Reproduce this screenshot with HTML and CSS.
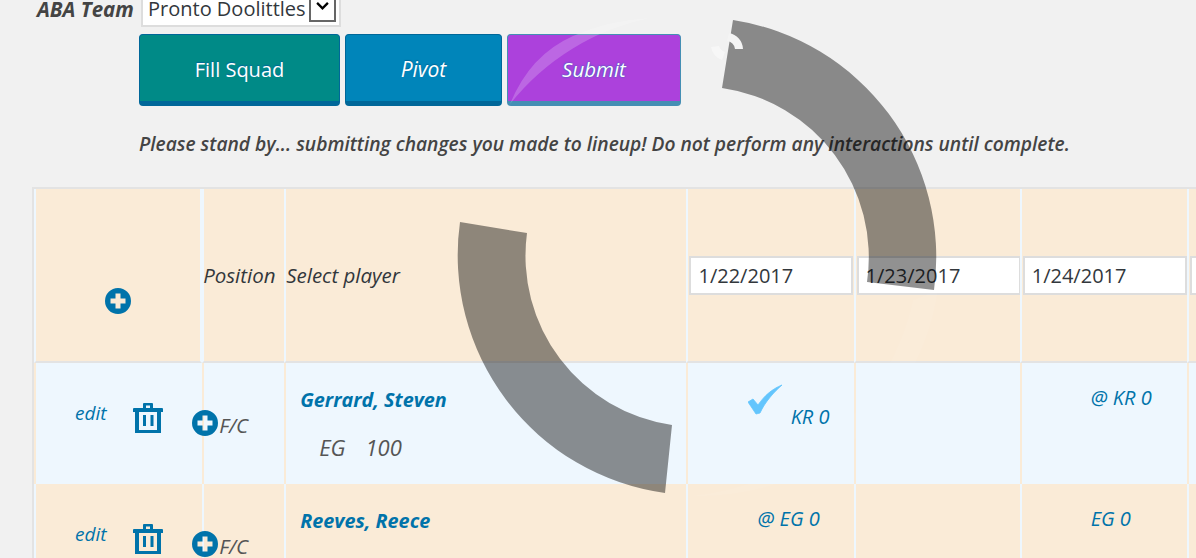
FILE: index.html
```html
<!DOCTYPE html>
<html lang="en">
<head>
    <meta charset="UTF-8">
    <title>Lineup</title>
    <link rel="stylesheet" href="styles.css">
</head>
<body>
    <div class="team-row">
        <label class="team-label" for="team">ABA Team</label>
        <div class="team-select">
            <select id="team"><option>Pronto Doolittles</option></select>
            <span class="select-arrow">
                <svg width="15" height="9" viewBox="0 0 16 10"><path d="M2 1l6 6 6-6" fill="none" stroke="#000" stroke-width="2.6"/></svg>
            </span>
        </div>
    </div>

    <div class="actions">
        <button class="btn btn-fill" type="button">Fill Squad</button>
        <button class="btn btn-pivot" type="button">Pivot</button>
        <button class="btn btn-submit" type="button">Submit</button>
    </div>

    <p class="notice">Please stand by... submitting changes you made to lineup! Do not perform any interactions until complete.</p>

    <table class="lineup">
        <colgroup>
            <col class="col-tools">
            <col class="col-pos">
            <col class="col-player">
            <col class="col-day">
            <col class="col-day2">
            <col class="col-day">
            <col class="col-day">
        </colgroup>
        <thead>
            <tr>
                <th class="add-cell">
                    <svg class="icon-plus" viewBox="0 0 26 26"><path fill-rule="evenodd" d="M13 0a13 13 0 1 0 0 26a13 13 0 1 0 0-26zM10.500 5.500h5v5h5v5h-5v5h-5v-5h-5v-5h5z"/></svg>
                </th>
                <th class="pos-head">Position</th>
                <th>Select player</th>
                <th><input class="date" type="text" value="1/22/2017"></th>
                <th><input class="date" type="text" value="1/23/2017"></th>
                <th><input class="date" type="text" value="1/24/2017"></th>
                <th><input class="date" type="text" value="1/25/2017"></th>
            </tr>
        </thead>
        <tbody>
            <tr class="row-odd">
                <td class="tools">
                    <div class="tools-inner">
                        <a href="#">edit</a>
                        <svg class="icon-trash" viewBox="0 0 30 31"><path fill-rule="evenodd" d="M11 0h8a1 1 0 0 1 1 1v4h9a1 1 0 0 1 1 1v3h-2v21h-26v-21h-2v-3a1 1 0 0 1 1-1h9v-4a1 1 0 0 1 1-1zM13 2.500v2.500h4v-2.500zM6 9v18h18v-18zM10 12h3v11h-3zM17.500 12h3v11h-3z"/></svg>
                    </div>
                </td>
                <td class="pos">
                    <svg class="icon-plus" viewBox="0 0 26 26"><path fill-rule="evenodd" d="M13 0a13 13 0 1 0 0 26a13 13 0 1 0 0-26zM10.500 5.500h5v5h5v5h-5v5h-5v-5h-5v-5h5z"/></svg>F/C
                </td>
                <td class="player">
                    <a class="name" href="#">Gerrard, Steven</a>
                    <div class="meta"><span>EG</span><span>100</span></div>
                </td>
                <td class="game game-checked">
                    <svg class="icon-check" viewBox="0 0 36 32"><path d="M0 18l5-3 5 6C16 12 24 5 34 1C26 8 17 18 12 29l-4 1z" fill="#63c5fd" stroke="#63c5fd" stroke-width="0.8"/></svg>
                    <span>KR 0</span>
                </td>
                <td class="game"></td>
                <td class="game"><span>@ KR 0</span></td>
                <td class="game"></td>
            </tr>
            <tr class="row-even">
                <td class="tools">
                    <div class="tools-inner">
                        <a href="#">edit</a>
                        <svg class="icon-trash" viewBox="0 0 30 31"><path fill-rule="evenodd" d="M11 0h8a1 1 0 0 1 1 1v4h9a1 1 0 0 1 1 1v3h-2v21h-26v-21h-2v-3a1 1 0 0 1 1-1h9v-4a1 1 0 0 1 1-1zM13 2.500v2.500h4v-2.500zM6 9v18h18v-18zM10 12h3v11h-3zM17.500 12h3v11h-3z"/></svg>
                    </div>
                </td>
                <td class="pos">
                    <svg class="icon-plus" viewBox="0 0 26 26"><path fill-rule="evenodd" d="M13 0a13 13 0 1 0 0 26a13 13 0 1 0 0-26zM10.500 5.500h5v5h5v5h-5v5h-5v-5h-5v-5h5z"/></svg>F/C
                </td>
                <td class="player"><a class="name" href="#">Reeves, Reece</a></td>
                <td class="game"><span>@ EG 0</span></td>
                <td class="game"></td>
                <td class="game"><span>EG 0</span></td>
                <td class="game"></td>
            </tr>
        </tbody>
    </table>

    <!-- loading spinner drawn over the page -->
    <svg class="spinner" width="1196" height="558" viewBox="0 0 1196 558">
        <path class="spin-tail" d="M510 104Q530 55 573 36Q610 20 650 18A240 240 0 0 0 510 104z"/>
        <path class="spin-faint" d="M938 290A240 240 0 0 1 690 496A252 252 0 0 0 913 300z"/>
        <path class="spin-dark" d="M733 20A240 240 0 0 1 934 290L867 282A171 171 0 0 0 722 88z"/>
        <path class="spin-dark" d="M460 222A240 240 0 0 0 665 493L672 425A171 171 0 0 1 527 233z"/>
        <path class="spin-small" d="M729 33A17 17 0 0 1 743 49L735 49A9 9 0 0 0 727 41z"/>
        <path class="spin-small-faint" d="M711 47A17 17 0 0 0 722 60L725 52A9 9 0 0 1 719 46z"/>
    </svg>
</body>
</html>
```

FILE: styles.css
```css
body {
    font-family: "Open Sans", "Noto Sans", sans-serif;
    margin: 0;
    background-color: #f1f1f1;
    color: #444;
    overflow: hidden;
    height: 558px;
}
a {
    color: #0073aa;
    text-decoration: none;
}

.team-row {
    display: flex;
    align-items: center;
    margin: -12px 0 0 37px;
    gap: 8px;
}
.team-label {
    width: 96px;
    padding-top: 2px;
    font-size: 20.5px;
    font-weight: 700;
    font-style: italic;
    white-space: nowrap;
}
.team-select {
    display: flex;
    align-items: flex-start;
    width: 196px;
    height: 35px;
    border: 2px solid #ddd;
    background-color: #fff;
}
.team-select select {
    appearance: none;
    border: none;
    background: none;
    font: 20px "Open Sans", sans-serif;
    color: #32373c;
    padding: 2px 0 0 5px;
    width: 166px;
    height: 35px;
}
.select-arrow {
    display: flex;
    justify-content: center;
    align-items: flex-end;
    width: 27px;
    height: 32px;
    border: 2px solid #666;
    padding-bottom: 9px;
    box-sizing: border-box;
}

.actions {
    display: flex;
    gap: 5px;
    margin: 7px 0 0 139px;
}
.btn {
    height: 72px;
    border: 1px solid #006799;
    border-bottom-width: 5px;
    border-radius: 4px;
    color: #fff;
    font: 20px "Open Sans", sans-serif;
    text-shadow: 0 -1px 1px #006799;
    padding: 2px 0 0;
}
.btn-fill {
    width: 201px;
    background-color: #008a87;
}
.btn-pivot {
    width: 157px;
    background-color: #0085ba;
    font-size: 21px;
    font-style: italic;
}
.btn-submit {
    width: 174px;
    background-color: #ac41dc;
    border-color: #458fb4;
    font-size: 20.5px;
    font-style: italic;
    text-shadow: 0 0 2px #0073aa;
}

.notice {
    margin: 26px 0 0 139px;
    font-size: 19.2px;
    font-weight: 600;
    font-style: italic;
    line-height: 24px;
    white-space: nowrap;
}

.lineup {
    table-layout: fixed;
    width: 1322px;
    margin: 31px 0 0 32px;
    border-collapse: separate;
    border-spacing: 0;
    border: 2px solid #e3e3e3;
    border-right: none;
    border-bottom: none;
    font-style: italic;
    font-size: 20.5px;
}
.col-tools { width: 168px; }
.col-pos { width: 82px; }
.col-player { width: 402px; }
.col-day { width: 167px; }
.col-day2 { width: 166px; }

.lineup th {
    padding: 0;
    background-color: #faebd7;
    border-left: 2px solid #eef7fe;
    border-bottom: 2px solid #e3e3e3;
    font-weight: 400;
    text-align: left;
    color: #32373c;
    box-sizing: border-box;
    height: 174px;
    white-space: nowrap;
}
.lineup th.add-cell {
    border-right: 2px solid #eef7fe;
    text-align: center;
    padding: 48px 0 0;
}
.lineup th.pos-head {
    text-indent: -1px;
}
.date {
    width: 164px;
    height: 39px;
    box-sizing: border-box;
    border: 2px solid #ddd;
    background-color: #fff;
    font: 20px "Open Sans", sans-serif;
    color: #32373c;
    padding: 0 7px;
    margin: 0 0 0 1px;
    display: block;
}

.lineup td {
    height: 121px;
    box-sizing: border-box;
    padding: 0;
    vertical-align: top;
    border-left: 2px solid;
}
.row-odd td {
    background-color: #eef7fe;
    border-left-color: #faebd7;
}
.row-even td {
    background-color: #faebd7;
    border-left-color: #eef7fe;
}

.lineup .tools {
    padding: 35px 0 0 39px;
    font-size: 19px;
}
.tools-inner {
    display: flex;
    gap: 26px;
}
.tools a {
    line-height: 30px;
}
.icon-trash {
    width: 30px;
    height: 31px;
    fill: #0073aa;
    margin-top: 5px;
}
.icon-plus {
    width: 26px;
    height: 26px;
    fill: #0073aa;
    vertical-align: middle;
}
.lineup .pos {
    padding-top: 47px;
    color: #555;
    font-size: 20.5px;
    white-space: nowrap;
}
.pos .icon-plus {
    margin-left: -12px;
    margin-right: 1px;
    vertical-align: -3px;
}
.lineup .player {
    padding: 22px 0 0 14px;
}
.name {
    font-size: 19.8px;
    font-weight: 700;
    line-height: 30px;
    display: block;
}
.meta {
    display: flex;
    gap: 20px;
    margin: 17px 0 0 19px;
    font-size: 22px;
    line-height: 30px;
    color: #555;
}
.lineup .game {
    padding: 21px 0 0 69px;
    color: #0073aa;
    font-size: 20px;
    white-space: nowrap;
}
.lineup .game-checked {
    padding-left: 60px;
}
.game-checked span {
    margin-left: 1px;
}
.icon-check {
    width: 36px;
    height: 32px;
    vertical-align: 8px;
}

.spinner {
    position: absolute;
    left: 0;
    top: 0;
}
.spin-dark {
    fill: rgba(0,0,0,0.43);
}
.spin-faint {
    fill: rgba(255,255,255,0.05);
}
.spin-tail {
    fill: rgba(255,255,255,0.2);
}
.spin-small {
    fill: #f4f4f4;
}
.spin-small-faint {
    fill: rgba(255,255,255,0.45);
}
```
